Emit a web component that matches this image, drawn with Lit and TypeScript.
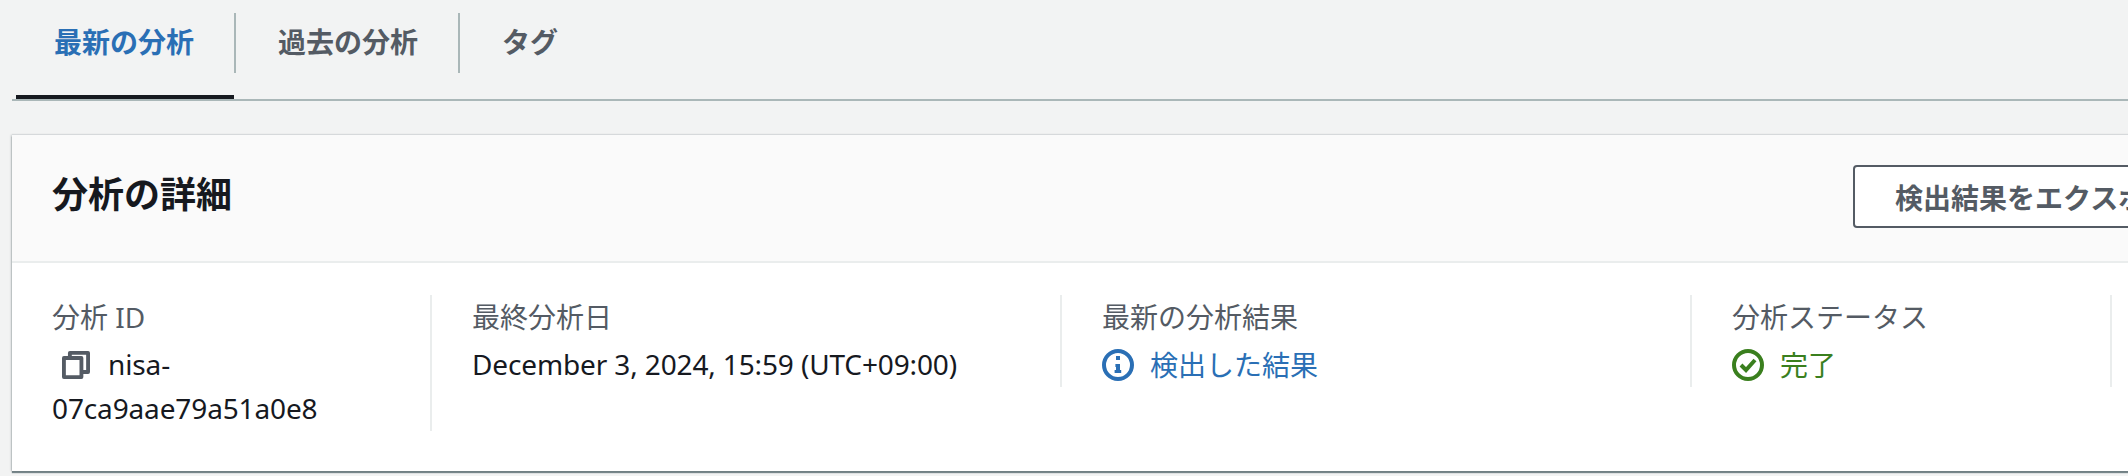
import { LitElement, html, css } from "lit";
import { customElement } from "lit/decorators.js";

@customElement("app-root")
export class AppRoot extends LitElement {
  static styles = css`
    :host {
      display: block;
      width: 2128px;
      height: 476px;
      overflow: hidden;
      background: #f2f3f3;
      font-family: "Noto Sans", "Noto Sans CJK JP", sans-serif;
      font-size: 28px;
      color: #16191f;
    }
    .tabs {
      display: flex;
      margin-left: 12px;
      border-bottom: 2px solid #aab7b8;
      height: 99px;
    }
    .tab {
      padding-top: 13px;
      color: #545b64;
      font-weight: 700;
    }
    .tab-label {
      display: block;
      height: 60px;
      line-height: 58px;
      padding: 0 40px 0 42px;
      border-right: 2px solid #aab7b8;
    }
    .tab:last-child .tab-label { border-right: none; }
    .tab.active { color: #2a6fb5; }
    .bar {
      height: 4px;
      margin: 22px 2px 0 4px;
      background: #16191f;
    }
    .card {
      margin: 34px 0 0 12px;
      width: 2276px;
      background: #fff;
      box-shadow: 0 2px 1px rgba(0, 28, 36, 0.5), 0 -1px 1px rgba(0, 28, 36, 0.05), -1px 0 2px rgba(0, 28, 36, 0.2);
    }
    .head {
      display: flex;
      align-items: center;
      justify-content: space-between;
      height: 123px;
      padding: 0 43px 3px 40px;
      background: #fafafa;
      border-bottom: 2px solid #eaeded;
      box-sizing: content-box;
    }
    h2 {
      margin: 0 0 3px;
      font-size: 36px;
      font-weight: 700;
      line-height: 120px;
    }
    .btn {
      box-sizing: border-box;
      height: 63px;
      width: 392px;
      border: 2px solid #545b64;
      border-radius: 4px;
      background: #fff;
      color: #545b64;
      font: inherit;
      font-weight: 700;
      padding: 0 40px;
      text-align: left;
      white-space: nowrap;
    }
    .cols {
      display: flex;
      align-items: flex-start;
      padding: 32px 0 40px;
    }
    .col {
      box-sizing: border-box;
      width: 630px;
      padding-left: 40px;
      border-right: 2px solid #eaeded;
    }
    .col.first { width: 420px; padding-right: 80px; }
    .col.last { width: 420px; }
    .label {
      color: #545b64;
      line-height: 44px;
      margin-bottom: 4px;
    }
    .value {
      line-height: 44px;
      letter-spacing: -0.13px;
      margin-top: -1px;
      padding-bottom: 1px;
    }
    .copy {
      display: inline-block;
      width: 28px;
      height: 28px;
      margin: 0 18px 0 10px;
      vertical-align: -4px;
      color: #545b64;
    }
    .status {
      display: flex;
      align-items: center;
      gap: 16px;
      line-height: 44px;
    }
    .status svg { width: 32px; height: 32px; flex: none; }
    .info { color: #2a6fb5; }
    .ok { color: #3a7f1e; }
    svg { display: block; }
    .copy svg { width: 100%; height: 100%; }
  `;

  render() {
    return html`
      <div class="tabs">
        <div class="tab active"><span class="tab-label">最新の分析</span><div class="bar"></div></div>
        <div class="tab"><span class="tab-label">過去の分析</span></div>
        <div class="tab"><span class="tab-label">タグ</span></div>
      </div>
      <section class="card">
        <header class="head">
          <h2>分析の詳細</h2>
          <button class="btn">検出結果をエクスポート</button>
        </header>
        <div class="cols">
          <div class="col first">
            <div class="label">分析 ID</div>
            <div class="value">
              <span class="copy">
                <svg viewBox="0 0 16 16" fill="none" stroke="currentColor" stroke-width="2.2" stroke-linejoin="round">
                  <rect x="1.1" y="4" width="10" height="10.9"></rect>
                  <path d="M4.5 4V1.1H14.9V12H11"></path>
                </svg>
              </span>nisa-07ca9aae79a51a0e8
            </div>
          </div>
          <div class="col">
            <div class="label">最終分析日</div>
            <div class="value">December 3, 2024, 15:59 (UTC+09:00)</div>
          </div>
          <div class="col">
            <div class="label">最新の分析結果</div>
            <div class="status info">
              <svg viewBox="0 0 16 16">
                <circle cx="8" cy="8" r="7" fill="none" stroke="currentColor" stroke-width="2"></circle>
                <path fill="currentColor" d="M7 3.5h2v2H7zM6.7 7.5H9V10.5h.6V12H6.3V10.5h.7V9h-.3z"></path>
              </svg>
              <span>検出した結果</span>
            </div>
          </div>
          <div class="col last">
            <div class="label">分析ステータス</div>
            <div class="status ok">
              <svg viewBox="0 0 16 16" fill="none" stroke="currentColor" stroke-width="2">
                <circle cx="8" cy="8" r="7"></circle>
                <path d="M4.5 8l2.5 2.5 4.5-5"></path>
              </svg>
              <span>完了</span>
            </div>
          </div>
        </div>
      </section>
    `;
  }
}
